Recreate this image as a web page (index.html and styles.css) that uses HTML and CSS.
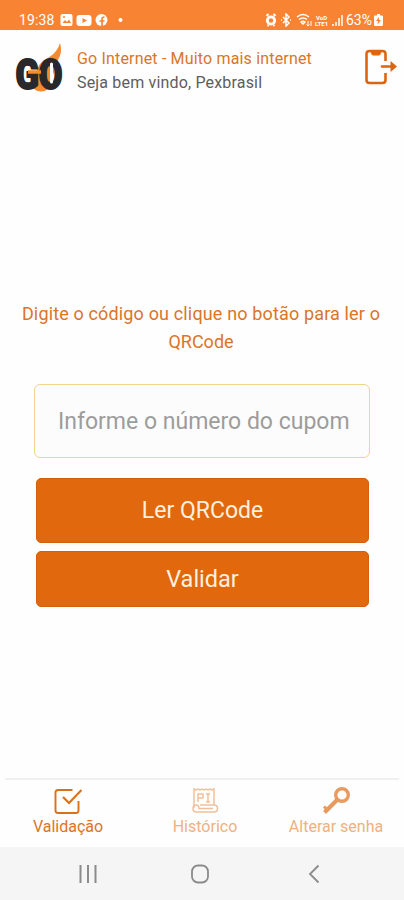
FILE: index.html
```html
<!DOCTYPE html>
<html lang="pt-BR">
<head>
  <meta charset="UTF-8">
  <meta name="viewport" content="width=device-width, initial-scale=1.0">
  <title>Go Internet</title>
  <link rel="stylesheet" href="styles.css">
</head>
<body>
  <div class="app">
    <div class="status-bar">
      <span class="clock">19:38</span>
      <svg class="status-left" width="66" height="14" viewBox="0 0 66 14">
        <rect x="0.500" y="1" width="12" height="12" rx="2" fill="#fff"/>
        <path d="M2.500 10l2.500-3 2 2 2-2.500 2 3.500z" fill="#f88433"/>
        <circle cx="4" cy="4" r="1" fill="#f88433"/>
        <rect x="16.500" y="2" width="15" height="11" rx="3" fill="#fff"/>
        <path d="M22.500 5l4.500 2.500-4.500 2.500z" fill="#f88433"/>
        <circle cx="41.500" cy="7" r="6" fill="#fff"/>
        <path d="M42 13V6q0-2 2.500-2M39.500 8h5" stroke="#f88433" stroke-width="1.700" fill="none"/>
        <circle cx="60.500" cy="7" r="2" fill="#fff"/>
      </svg>
      <svg class="status-right" width="80" height="14" viewBox="0 0 80 14" fill="none" stroke="#fff">
        <circle cx="3.500" cy="7.500" r="3.700" stroke-width="2.800" transform="translate(1.500 0)"/>
        <path d="M0.500 3l2-2M7.500 1l2 2M1.500 13l1-1M8.500 13l-1-1" stroke-width="2"/>
        <path d="M17 4l6 6-3 3V1l3 3-6 6M15 7h1M24 7h1" stroke-width="1.500"/>
        <path d="M31 4q6-5 12 0M33 6.500q4-3 8 0M35 9q2-1.500 4 0l-2 2z" stroke-width="1.500"/>
        <path d="M42 8v5M40.500 11.500L42 13l1.500-1.500M45 13V8" stroke-width="1"/>
        <path d="M67 13v-2M70 13V9M73 13V5M76 13V2" stroke-width="1.500"/>
        <text class="volte" x="50" y="6.500">VoD</text>
        <text class="volte" x="49" y="13">LTE1</text>
      </svg>
      <span class="percent">63%</span>
      <svg width="9" height="12" viewBox="0 0 9 12">
        <path d="M3 0h3v1.500h2q1 0 1 1V11q0 1-1 1H1q-1 0-1-1V2.500q0-1 1-1h2z" fill="#fff"/>
        <path d="M5 3L2 7h2L3.500 10.500 7 6H5z" fill="#f88433"/>
      </svg>
    </div>

    <header class="header">
      <svg class="logo" width="54" height="62" viewBox="0 0 54 62">
        <path d="M47 1c2 7 1 12-2 17l-9 27c-3 6-12 6-17 0l6-6c-3-8-1-15 5-20 8-5 14-8 17-18z" fill="#f58a2e"/>
        <text class="logo-text" x="2.500" y="47" textLength="47" lengthAdjust="spacingAndGlyphs">GO</text>
        <path d="M15 30h13" stroke="#f58a2e" stroke-width="3.500"/>
        <path d="M38.500 22v18" stroke="#fff" stroke-width="3" stroke-linecap="round"/>
      </svg>
      <div class="welcome">
        <div class="brand">Go Internet - Muito mais internet</div>
        <div class="user">Seja bem vindo, Pexbrasil</div>
      </div>
      <svg class="logout" width="34" height="36" viewBox="0 0 34 36" fill="none" stroke="#dc6512" stroke-width="2.600">
        <path d="M21.500 12V5q0-3-3-3h-13q-3 0-3 3v26q0 3 3 3h13q3 0 3-3v-7"/>
        <path d="M7 3h10l-1.500 3h-7z" fill="#dc6512" stroke-width="1"/>
        <path d="M18 17.500h11" stroke-linecap="round"/>
        <path d="M26.500 12l6.500 5.500-6.500 5.500z" fill="#dc6512" stroke="none"/>
      </svg>
    </header>

    <main class="content">
      <p class="hint"><span class="hint-text">Digite o código ou clique no botão para ler o</span><br>QRCode</p>
      <input class="coupon" type="text" placeholder="Informe o número do cupom">
      <button class="btn btn-read">Ler QRCode</button>
      <button class="btn btn-validate">Validar</button>
    </main>

    <nav class="tabs">
      <div class="tab active">
        <svg width="28" height="28" viewBox="0 0 28 28" fill="none" stroke="#dc7018" stroke-width="1.900">
          <path d="M18.500 3H4Q1.500 3 1.500 5.500v18Q1.500 26 4 26h18q2.500 0 2.500-2.500V14"/>
          <path d="M9 10l6 6L27.500 3" stroke-width="2.200"/>
        </svg>
        <span>Validação</span>
      </div>
      <div class="tab">
        <svg width="28" height="28" viewBox="0 0 28 28" fill="none" stroke="#f0c09c" stroke-width="1.500">
          <path d="M3 21V2l2 1 2-1 2 1 2-1 2 1 2-1 2 1 2-1 2 1 2-1v16"/>
          <path d="M9 18h14q3.500 0 3.500 3.500T23 25H5q-3 0-3-3.500T5 18q3 0 3 3.500h14"/>
          <path d="M7 15V7h5v4H7M15 7h4M17 7v8M15 15h4"/>
        </svg>
        <span>Histórico</span>
      </div>
      <div class="tab">
        <svg width="30" height="28" viewBox="0 0 30 28" fill="none" stroke="#e99a5e">
          <circle cx="21" cy="8" r="6.300" stroke-width="3.400"/>
          <path d="M16.500 12.500L3.500 25.500" stroke-width="4.200"/>
          <path d="M3 19.500l4 4" stroke-width="3"/>
        </svg>
        <span>Alterar senha</span>
      </div>
    </nav>

    <div class="system-nav">
      <svg width="18" height="20" viewBox="0 0 18 20"><path d="M1.500 1v18M9 1v18M16.500 1v18" stroke="#8b8b8b" stroke-width="2"/></svg>
      <svg class="home" width="18" height="20" viewBox="0 0 18 20"><rect x="1" y="1.500" width="16" height="17" rx="6" fill="none" stroke="#8b8b8b" stroke-width="1.800"/></svg>
      <svg width="12" height="20" viewBox="0 0 12 20"><path d="M10.500 1.500L2 10l8.500 8.500" fill="none" stroke="#8b8b8b" stroke-width="1.800"/></svg>
    </div>
  </div>
</body>
</html>
```

FILE: styles.css
```css
* {
  box-sizing: border-box;
}
body {
  margin: 0;
  font-family: Roboto, "Open Sans", sans-serif;
  background: #fefefe;
}
.app {
  height: 900px;
  display: flex;
  flex-direction: column;
  overflow: hidden;
}
.status-bar {
  height: 30px;
  padding: 9px 21px 0 19px;
  background: #f88433;
  color: #fff;
  display: flex;
  align-items: center;
  font-size: 14px;
}
.clock {
  width: 41px;
  letter-spacing: 0.1px;
}
.status-right {
  margin-left: auto;
}
.volte {
  font-size: 6px;
  font-weight: bold;
  fill: #fff;
  stroke: none;
}
.percent {
  margin: 0 2px 0 0;
}
.header {
  height: 78px;
  display: flex;
  align-items: flex-start;
  padding: 12px 6px 0 13px;
}
.logo-text {
  font-family: Roboto, sans-serif;
  font-weight: 900;
  font-size: 42px;
  fill: #29282a;
  stroke: #29282a;
  stroke-width: 2px;
}
.welcome {
  margin-left: 10px;
  padding-top: 5px;
  font-size: 16px;
  line-height: 24px;
  letter-spacing: 0.17px;
  white-space: nowrap;
}
.brand {
  color: #dc7428;
}
.user {
  color: #5d5d5d;
}
.logout {
  margin: 7px 0 0 auto;
}
.content {
  flex: 1;
  padding: 192px 34px 0;
  display: flex;
  flex-direction: column;
}
.hint {
  margin: 0 -24px 0 -26px;
  text-align: center;
  font-size: 18px;
  line-height: 28px;
  color: #dc7428;
  white-space: nowrap;
}
.hint-text {
  letter-spacing: 0.15px;
}
.coupon {
  width: 336px;
  height: 74px;
  margin-top: 28px;
  padding: 0 10px 0 23px;
  border: 1.500px solid #f2d58d;
  border-radius: 6px;
  background: #fcfcfc;
  font-family: inherit;
  font-size: 23px;
  outline: none;
}
.coupon::placeholder {
  color: #9c9c9c;
}
.btn {
  margin: 0 1px 0 2px;
  border: 1px solid #d45f0c;
  border-radius: 5px;
  background: #e2680e;
  color: #fff0df;
  font-family: inherit;
  font-size: 23px;
}
.btn-read {
  height: 65px;
  margin-top: 20px;
}
.btn-validate {
  height: 56px;
  margin-top: 8px;
  font-size: 23.5px;
}
.tabs {
  height: 69px;
  margin: 0 5px;
  padding-top: 7px;
  border-top: 2px solid #f0f0f0;
  display: flex;
  justify-content: space-between;
}
.tab {
  width: 126px;
  display: flex;
  flex-direction: column;
  align-items: center;
  font-size: 16px;
  line-height: 23px;
  color: #edb183;
  white-space: nowrap;
}
.tab:nth-child(2) {
  margin-left: 6px;
}
.tab.active {
  color: #dc7428;
}
.system-nav {
  height: 53px;
  padding: 0 84px 0 79px;
  background: #f5f5f5;
  display: flex;
  justify-content: space-between;
  align-items: center;
}
.home {
  margin-right: 5px;
}
```
